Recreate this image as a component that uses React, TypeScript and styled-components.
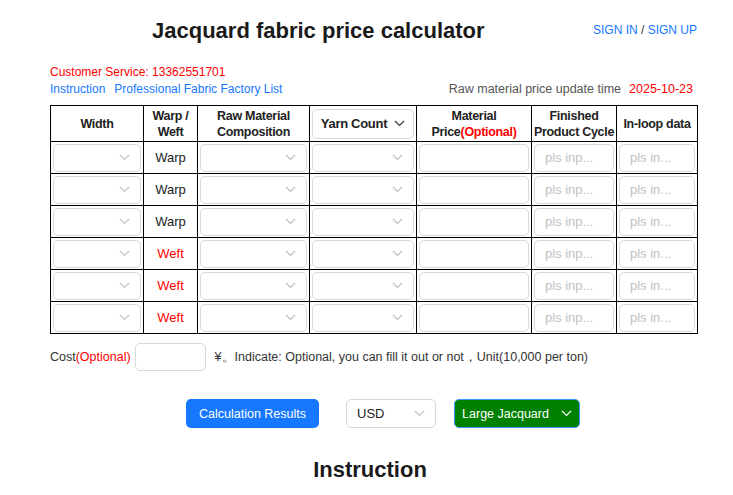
import React from 'react';
import styled, { createGlobalStyle } from 'styled-components';

const GlobalStyle = createGlobalStyle`
  body {
    margin: 0;
    background: #fff;
    font-family: "Liberation Sans", Arial, sans-serif;
    color: #222;
  }
`;

const Page = styled.div`
  width: 647px;
  margin-left: 50px;
`;

const Header = styled.div`
  display: flex;
  align-items: flex-start;
  justify-content: space-between;
  padding-top: 17px;
  height: 64px;
  box-sizing: border-box;
`;

const Title = styled.h1`
  margin: 0 0 0 102px;
  font-size: 22px;
  font-weight: bold;
  color: #1a1a1a;
  line-height: 28px;
`;

const Sign = styled.div`
  font-size: 12px;
  color: #1677ff;
  margin-top: 6px;
  span {
    color: #333;
  }
`;

const Service = styled.div`
  color: red;
  font-size: 12px;
  line-height: 17px;
`;

const InfoRow = styled.div`
  display: flex;
  justify-content: space-between;
  font-size: 12.5px;
  line-height: 17px;
  margin-bottom: 7px;
`;

const Links = styled.div`
  display: flex;
  gap: 9px;
  color: #1677ff;
  font-size: 12px;
`;

const UpdateTime = styled.div`
  color: #555;
  margin-right: 4px;
  b {
    font-weight: normal;
    color: red;
    margin-left: 8px;
  }
`;

const Table = styled.table`
  width: 648px;
  border-collapse: collapse;
  table-layout: fixed;
  font-size: 13px;
`;

const Th = styled.th`
  border: 1.5px solid #000;
  height: 33px;
  padding: 0;
  font-size: 12.5px;
  letter-spacing: -0.3px;
  font-weight: bold;
  line-height: 16px;
  text-align: center;
  white-space: nowrap;
  em {
    font-style: normal;
    color: red;
  }
`;

const Td = styled.td<{ $weft?: boolean }>`
  border: 1.5px solid #000;
  height: 32px;
  padding: 1px 2px;
  text-align: center;
  font-size: 13px;
  color: ${p => (p.$weft ? 'red' : '#222')};
  box-sizing: border-box;
`;

const SelectBox = styled.div<{ $bold?: boolean; $h?: number }>`
  display: flex;
  align-items: center;
  justify-content: ${p => (p.$bold ? 'center' : 'flex-end')};
  gap: 7px;
  height: ${p => p.$h ?? 28}px;
  border: 1px solid #d9d9d9;
  border-radius: 5px;
  padding: 0 10px;
  box-sizing: border-box;
  font-weight: ${p => (p.$bold ? 'bold' : 'normal')};
  white-space: nowrap;
  color: #222;
  font-size: 13px;
  svg {
    flex-shrink: 0;
  }
`;

const Field = styled.div`
  height: 28px;
  border: 1px solid #d9d9d9;
  border-radius: 5px;
  padding: 0 10px;
  display: flex;
  align-items: center;
  box-sizing: border-box;
  color: #bfbfbf;
  font-size: 13px;
  white-space: nowrap;
`;

const CostRow = styled.div`
  display: flex;
  align-items: center;
  margin-top: 9px;
  font-size: 12.5px;
  color: #333;
  em {
    font-style: normal;
    color: red;
  }
`;

const CostInput = styled.div`
  width: 71px;
  height: 28px;
  border: 1px solid #d9d9d9;
  border-radius: 5px;
  margin: 0 9px 0 4px;
  box-sizing: border-box;
`;

const Actions = styled.div`
  display: flex;
  align-items: center;
  margin-top: 28px;
  padding-left: 136px;
`;

const Button = styled.div<{ $green?: boolean }>`
  height: 29px;
  display: flex;
  align-items: center;
  justify-content: center;
  gap: 12px;
  border-radius: 5px;
  font-size: 12.5px;
  white-space: nowrap;
  color: #fff;
  background: ${p => (p.$green ? '#008000' : '#1677ff')};
  border: ${p => (p.$green ? '1px solid #4096ff' : 'none')};
  box-sizing: border-box;
  width: ${p => (p.$green ? 126 : 133)}px;
  svg {
    flex-shrink: 0;
  }
`;

const Currency = styled.div`
  width: 90px;
  height: 29px;
  border: 1px solid #d9d9d9;
  border-radius: 5px;
  display: flex;
  align-items: center;
  justify-content: space-between;
  padding: 0 10px;
  box-sizing: border-box;
  font-size: 13px;
  margin: 0 18px 0 27px;
`;

const Heading = styled.h2`
  margin: 29px 0 0 0;
  padding-right: 7px;
  text-align: center;
  font-size: 22px;
  font-weight: bold;
  color: #1a1a1a;
`;

const Chevron: React.FC<{ color?: string }> = ({ color = '#bfbfbf' }) => (
  <svg width="11" height="7" viewBox="0 0 11 7" fill="none">
    <path d="M1 1l4.5 4.5L10 1" stroke={color} strokeWidth="1.1" />
  </svg>
);

const cols = [93, 54, 112, 107, 115, 85, 81];
const total = cols.reduce((a, b) => a + b, 0);
const rows = ['Warp', 'Warp', 'Warp', 'Weft', 'Weft', 'Weft'];

const App: React.FC = () => (
  <>
    <GlobalStyle />
    <Page>
      <Header>
        <Title>Jacquard fabric price calculator</Title>
        <Sign>SIGN IN <span>/</span> SIGN UP</Sign>
      </Header>
      <Service>Customer Service: 13362551701</Service>
      <InfoRow>
        <Links>
          <span>Instruction</span>
          <span>Professional Fabric Factory List</span>
        </Links>
        <UpdateTime>
          Raw material price update time<b>2025-10-23</b>
        </UpdateTime>
      </InfoRow>
      <Table>
        <colgroup>
          {cols.map((w, i) => (
            <col key={i} style={{ width: `${(w / total) * 100}%` }} />
          ))}
        </colgroup>
        <thead>
          <tr>
            <Th>Width</Th>
            <Th>Warp /<br />Weft</Th>
            <Th>Raw Material<br />Composition</Th>
            <Th style={{ padding: '1px 2px' }}>
              <SelectBox $bold $h={30}>
                Yarn Count <Chevron color="#333" />
              </SelectBox>
            </Th>
            <Th>Material<br />Price<em>(Optional)</em></Th>
            <Th>Finished<br />Product Cycle</Th>
            <Th>In-loop data</Th>
          </tr>
        </thead>
        <tbody>
          {rows.map((r, i) => (
            <tr key={i}>
              <Td><SelectBox><Chevron /></SelectBox></Td>
              <Td $weft={r === 'Weft'}>{r}</Td>
              <Td><SelectBox><Chevron /></SelectBox></Td>
              <Td><SelectBox><Chevron /></SelectBox></Td>
              <Td><Field /></Td>
              <Td><Field>pls inp...</Field></Td>
              <Td><Field>pls in...</Field></Td>
            </tr>
          ))}
        </tbody>
      </Table>
      <CostRow>
        Cost<em>(Optional)</em>
        <CostInput />
        ¥。Indicate: Optional, you can fill it out or not，Unit(10,000 per ton)
      </CostRow>
      <Actions>
        <Button>Calculation Results</Button>
        <Currency>USD <Chevron /></Currency>
        <Button $green>Large Jacquard <Chevron color="#fff" /></Button>
      </Actions>
      <Heading>Instruction</Heading>
    </Page>
  </>
);

export default App;
